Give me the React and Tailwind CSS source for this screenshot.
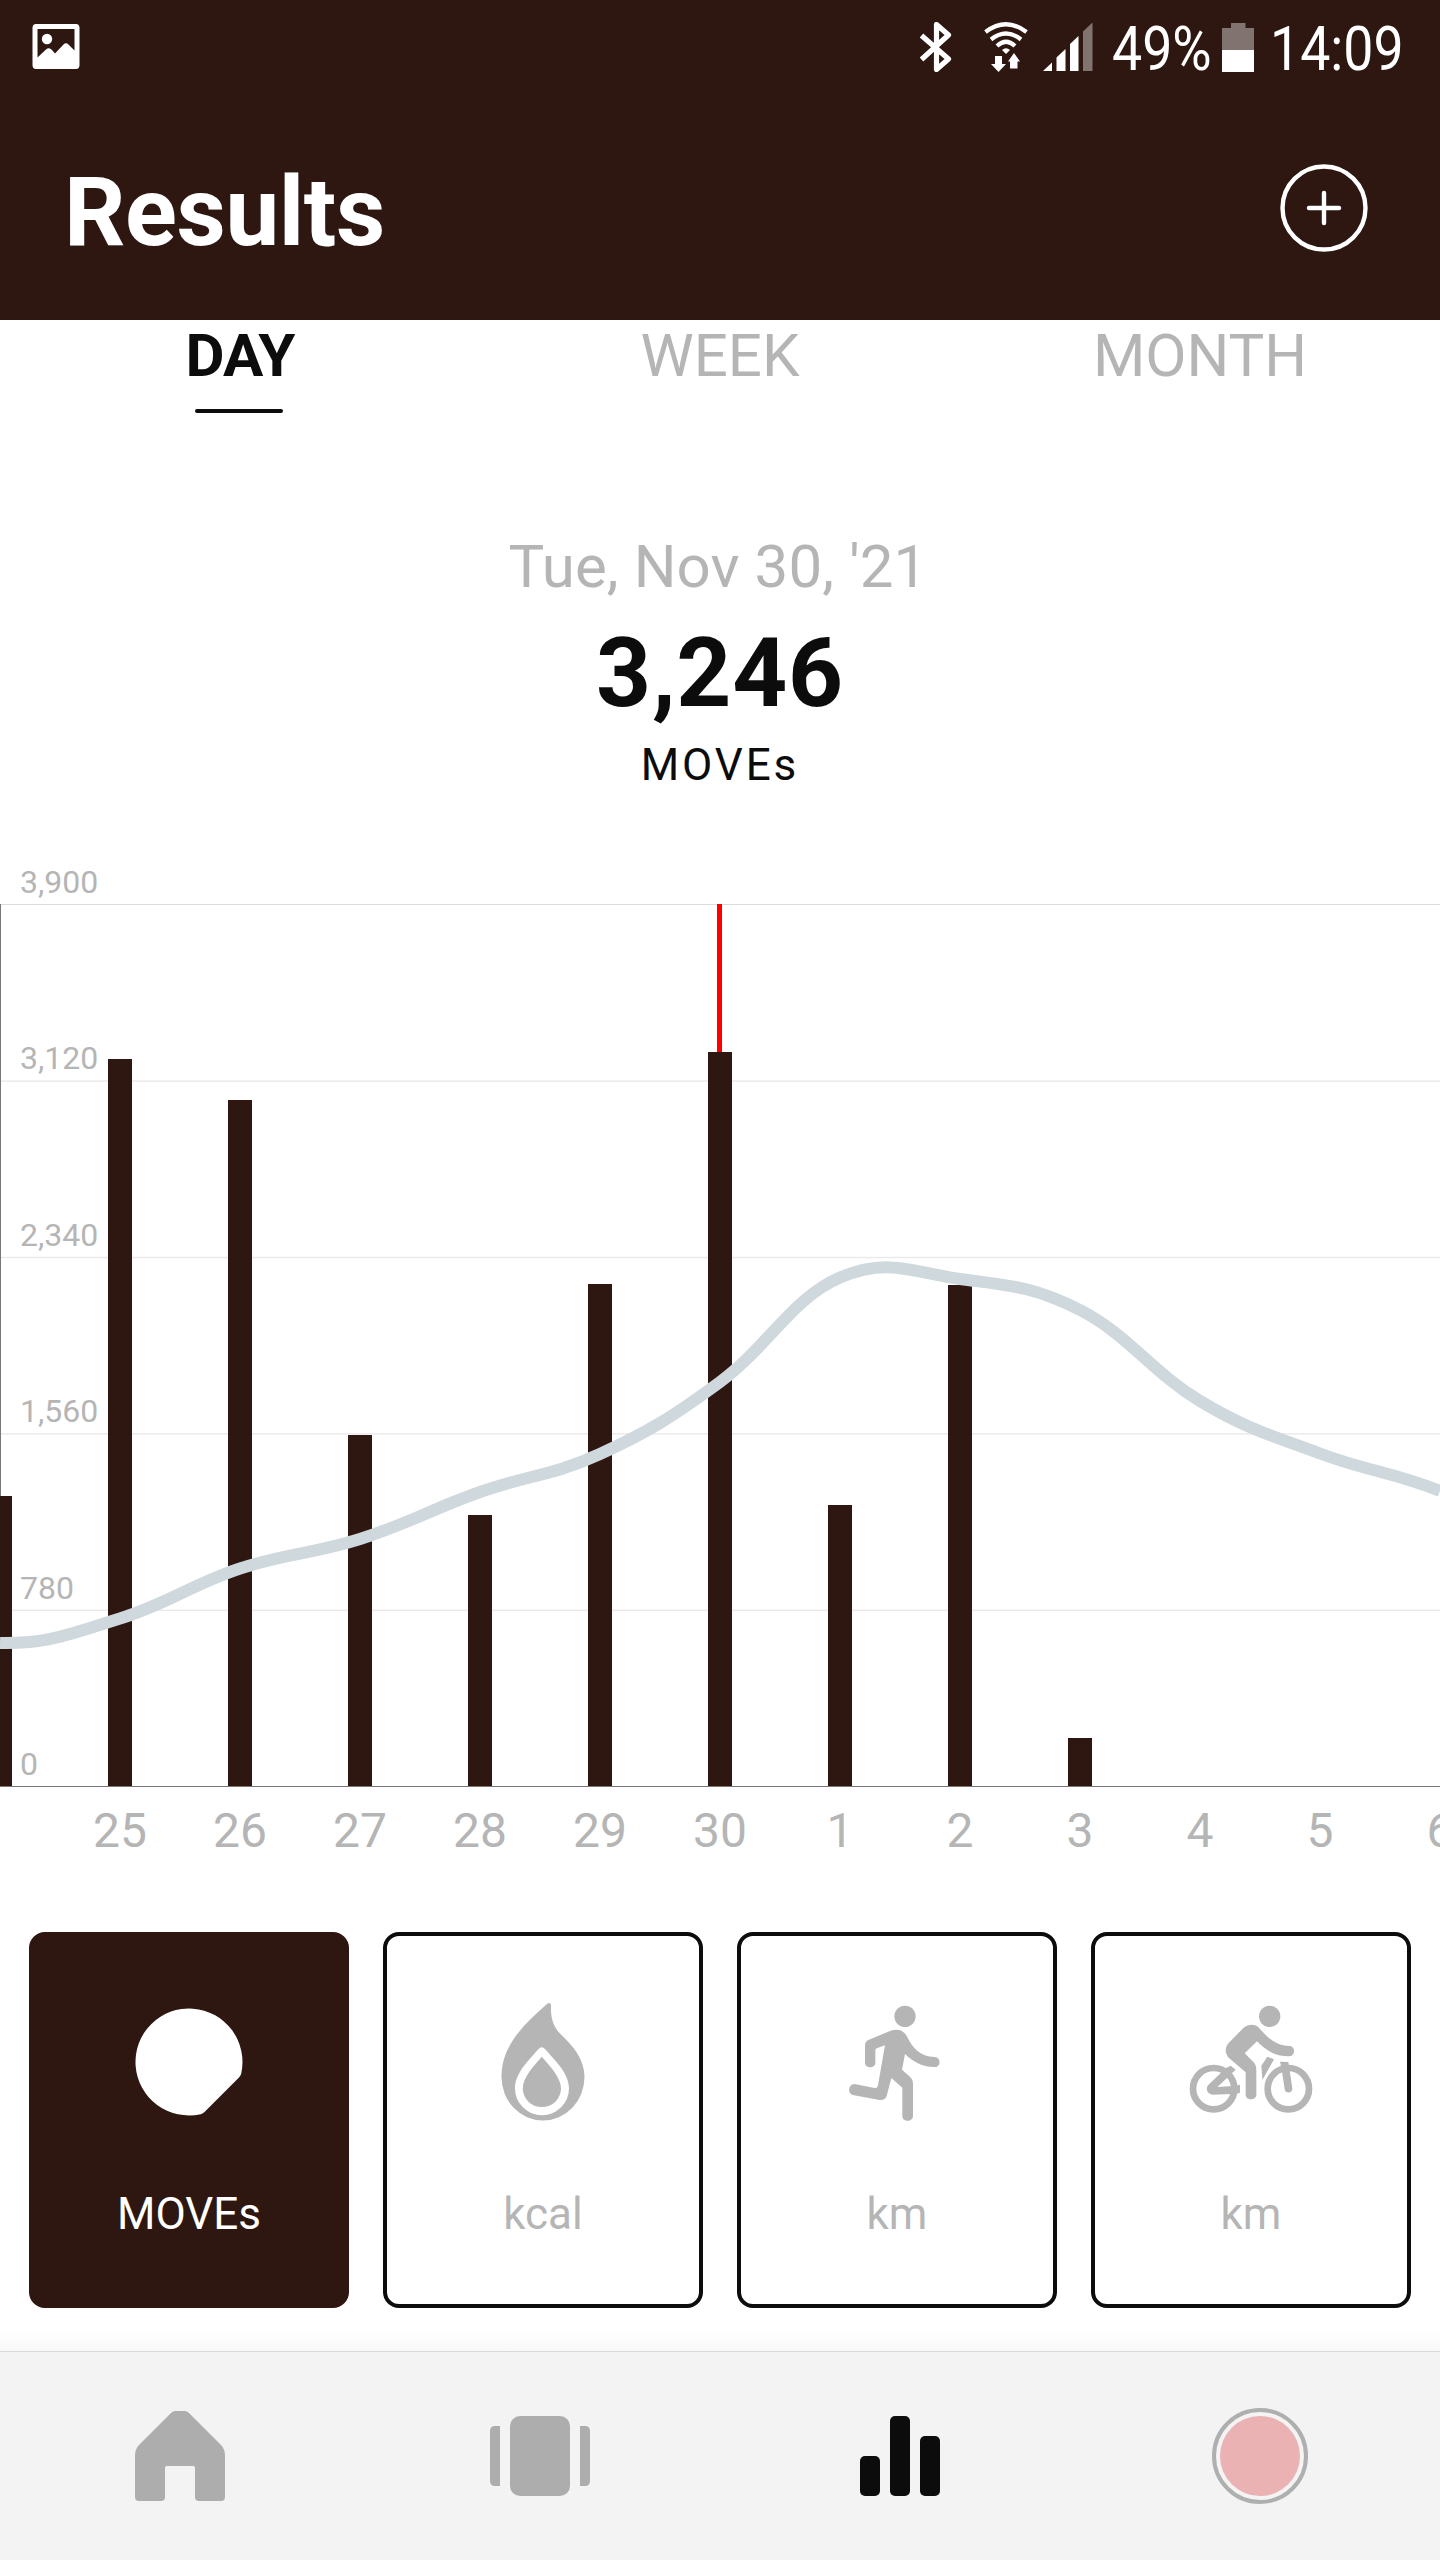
import React, { useState } from "react";

const tabs = ["DAY", "WEEK", "MONTH"];

// top = y of the bar's upper edge inside the chart svg
const days = [
  { label: "", top: 636 },
  { label: "25", top: 199 },
  { label: "26", top: 240 },
  { label: "27", top: 575 },
  { label: "28", top: 655 },
  { label: "29", top: 424 },
  { label: "30", top: 192 },
  { label: "1", top: 645 },
  { label: "2", top: 425 },
  { label: "3", top: 878 },
  { label: "4", top: null },
  { label: "5", top: null },
  { label: "6", top: null },
];

const gridLabels = ["3,900", "3,120", "2,340", "1,560", "780", "0"];

// trend values, one per day plus one hidden neighbour on each side
const trend = [753, 783, 758.5, 708.5, 679, 632, 594, 522, 417.5, 419, 450, 541, 593.5, 631, 690];

const STEP = 120;
const BASE = 926;

function trendPath() {
  let d = `M0 ${trend[1]}`;
  for (let i = 2; i < trend.length - 1; i++) {
    const x0 = (i - 2) * STEP;
    const x1 = (i - 1) * STEP;
    const c1 = trend[i - 1] + (trend[i] - trend[i - 2]) * 0.2;
    const c2 = trend[i] - (trend[i + 1] - trend[i - 1]) * 0.2;
    d += ` C${x0 + 48} ${c1} ${x1 - 48} ${c2} ${x1} ${trend[i]}`;
  }
  return d;
}

function StatusBar() {
  return (
    <div className="flex h-24 items-start justify-between pl-8 pr-[37px] text-white">
      <svg className="mt-6 h-[46px] w-12" viewBox="0 0 48 46" fill="currentColor">
        <path
          fillRule="evenodd"
          d="M4 0H44Q47.5 0 47.5 4V41Q47.5 45 44 45H4Q.5 45 .5 41V4Q.5 0 4 0ZM5.5 5V33.5L14 25.5Q17 23 20 26L23 29.5L31.5 20.5Q34 18 36.5 20.5L42.5 26.5V5Z"
        />
        <circle cx="15" cy="15" r="5.2" />
      </svg>

      <div className="flex items-start">
        {/* bluetooth */}
        <svg className="mt-[22px] h-[50px] w-[34px]" viewBox="0 0 34 50" fill="none" stroke="currentColor" strokeWidth="5.2" strokeLinejoin="round">
          <path d="M2.5 13.5L29.5 37L17.5 47.5V2.5L29.5 13L2.5 37.5" />
        </svg>
        {/* wifi */}
        <svg className="ml-[31px] mt-[22px] h-[50px] w-[44px]" viewBox="0 0 44 50" fill="none" stroke="currentColor" strokeWidth="4.2">
          <path d="M1.5 10Q22 -5.5 42.5 10" />
          <path d="M7 17.5Q22 5.5 37 17.5" />
          <path d="M13 24Q22 15.5 31 24" />
          <path d="M18 28Q22 24.5 26 28L22 32Z" fill="currentColor" stroke="none" />
          <path d="M11 34H18V42H22L14.5 50L7 42H11Z" fill="currentColor" stroke="none" />
          <path d="M26 46.5H33.5V39.5H36L30 31L24 39.5H26Z" fill="currentColor" stroke="none" />
        </svg>
        {/* signal */}
        <svg className="ml-[15px] mt-[22px] h-[50px] w-[50px]" viewBox="0 0 50 50" fill="currentColor">
          <path d="M0 49L9 40.5V49Z" />
          <path d="M13.5 49V35.5L22.5 27V49Z" />
          <path d="M27 49V22L35.5 14V49Z" />
          <path d="M40 49V9.5L49.5 .5V49Z" opacity=".4" />
        </svg>
        <span className="ml-[19px] mt-[13px] w-[99px] origin-left scale-x-[.88] text-[61px] leading-[72px]">49%</span>
        <svg className="ml-[11px] mt-[23px] h-[49px] w-8" viewBox="0 0 32 49" fill="currentColor">
          <path d="M0 5H9V0H23.5V5H32V27H0Z" opacity=".4" />
          <path d="M0 27H32V49H0Z" />
        </svg>
        <span className="ml-4 mt-[13px] w-[133px] origin-left scale-x-[.88] text-[61px] leading-[72px]">14:09</span>
      </div>
    </div>
  );
}

function Chart() {
  return (
    <svg className="mt-[69px] block h-[1000px] w-full" viewBox="0 0 1440 1000">
      {gridLabels.map((label, i) => (
        <g key={label}>
          {i < 5 && (
            <rect x="0" y={44 + i * 176.4} width="1440" height={i === 0 ? 1 : 1.4} fill={i === 0 ? "#dcdcdc" : "#e9e9e9"} />
          )}
          <text x="20" y={33 + i * 176.4} fontSize="32" fill="#b5b5b5">
            {label}
          </text>
        </g>
      ))}
      <rect x="0" y="44" width="1" height="882" fill="#777777" />
      <rect x="717" y="44" width="5" height="150" fill="#ff0000" />
      {days.map((day, i) => (
        <g key={i}>
          {day.top !== null && (
            <rect x={i * STEP - 12} y={day.top} width="24" height={BASE - day.top} fill="#2d1710" />
          )}
          <text x={i * STEP} y="987" fontSize="48" textAnchor="middle" fill="#b5b5b5">
            {day.label}
          </text>
        </g>
      ))}
      <rect x="0" y={BASE} width="1440" height="1" fill="#777777" />
      <path d={trendPath()} fill="none" stroke="#cfd8dc" strokeWidth="12" />
    </svg>
  );
}

function MoveIcon() {
  return (
    <svg className="size-32" viewBox="0 0 128 128" fill="currentColor">
      <path d="M116.2 75.7A53.5 53.5 0 1 0 75.7 116.2Q78 115.5 80 113.5L113.5 80Q115.5 78 116.2 75.7Z" />
    </svg>
  );
}

function FlameIcon() {
  return (
    <svg className="size-32" viewBox="0 0 128 128" fill="currentColor">
      <path
        fillRule="evenodd"
        d="M68.5 5.5C70.5 4 72.5 5.5 72 8.5C71.5 23 76 31 83.500 38C95 49 105.5 62 105.5 79A41.5 43.5 0 0 1 22.5 79C22.5 48 44 27 68.5 5.5ZM59.5 51C50 62 36 75 36 90.5A26.8 26.5 0 0 0 90 90.5C90 75 75.5 62 66 51Q62.8 47.5 59.5 51Z"
      />
      <path d="M62.8 58.7C55 68 43.8 79 43.8 90.5A19 18.5 0 0 0 82 90.5C82 79 70.5 68 62.8 58.7Z" />
    </svg>
  );
}

function RunIcon() {
  return (
    <svg className="size-32" viewBox="-21 24 384 384" fill="currentColor">
      <circle cx="195" cy="79" r="32" />
      <path d="M75 168C75 156 80 152 87 149L150 123C175 114 192 122 202 141C216 172 240 200 284 201C303 202 304 231 284 231C245 231 215 212 195 192L186 239L208 259C216 266 219 272 219 283V378C219 397 187 397 187 378V293L154 264L141 314C138 326 131 331 119 330L38 315C22 310 25 283 43 282L104 294C110 295 113 291 114 286L135 166L112 174C107 176 106 179 106 184V218C106 236 75 236 75 218Z" />
    </svg>
  );
}

function BikeIcon() {
  return (
    <svg className="size-32" viewBox="41 24 384 384" fill="currentColor">
      <circle cx="289" cy="79" r="32" />
      <path d="M211 113C223 102 242 101 254 110C280 139 303 167 348 168C367 168 367 198 348 199C303 199 275 179 251 154L214 190L241 217C247 224 249 230 249 240V314C249 332 217 332 217 314V247L166 203C154 190 154 172 166 159Z" />
      <circle cx="121" cy="296" r="62" fill="none" stroke="currentColor" strokeWidth="20" />
      <circle cx="345" cy="296" r="62" fill="none" stroke="currentColor" strokeWidth="20" />
      <path d="M172 227L187 239L179 247L175 251L132 291L188 287L200 284V308L190 311L119 314C102 313 96 297 104 286L158 234Z" />
      <path d="M282 200L302 208L267 270L264 227Z" />
      <path d="M320 215L345 216L357 295C358 311 336 312 334 298L325 238Z" />
    </svg>
  );
}

const metrics = [
  { label: "MOVEs", Icon: MoveIcon },
  { label: "kcal", Icon: FlameIcon },
  { label: "km", Icon: RunIcon },
  { label: "km", Icon: BikeIcon },
];

function BottomNav() {
  return (
    <nav className="grid h-[209px] grid-cols-4 items-center justify-items-center border-t border-[#d9d9d9] bg-[#f3f3f3]">
      <svg className="size-[100px] text-[#adadad]" viewBox="0 0 100 100" fill="currentColor">
        <path d="M45 5H55Q57 5 59 7L91 39Q95 43 95 50V91Q95 95 91 95H69Q65 95 65 91V62Q65 60 63 60H37Q35 60 35 62V91Q35 95 31 95H9Q5 95 5 91V50Q5 43 9 39L41 7Q43 5 45 5Z" />
      </svg>
      <svg className="size-[100px] text-[#adadad]" viewBox="0 0 100 100" fill="currentColor">
        <rect x="20" y="10" width="60" height="80" rx="10" />
        <path d="M10 20V80H5Q0 80 0 75V25Q0 20 5 20Z" />
        <path d="M90 20V80H95Q100 80 100 75V25Q100 20 95 20Z" />
      </svg>
      <svg className="size-[100px] text-[#0c0c0c]" viewBox="0 0 100 100" fill="currentColor">
        <rect x="10" y="50" width="20" height="40" rx="5" />
        <rect x="40" y="10" width="20" height="80" rx="5" />
        <rect x="70" y="30" width="20" height="60" rx="5" />
      </svg>
      <svg className="size-[100px]" viewBox="0 0 100 100">
        <circle cx="50" cy="50" r="46" fill="#f5f3f3" stroke="#adb0ae" strokeWidth="4" />
        <circle cx="50" cy="50" r="40" fill="#ebb2b4" />
      </svg>
    </nav>
  );
}

function App() {
  const [activeTab, setActiveTab] = useState("DAY");
  const [activeMetric, setActiveMetric] = useState(0);

  return (
    <div className="flex h-[2560px] w-[1440px] flex-col overflow-hidden bg-white font-['Roboto',sans-serif]">
      <header className="h-80 shrink-0 bg-[#2d1710] text-white">
        <StatusBar />
        <div className="flex h-56 items-center justify-between pl-16 pr-[72px]">
          <h1 className="pt-2 text-[96px] font-bold leading-[96px] tracking-[-0.4px]">Results</h1>
          <button>
            <svg className="size-[88px]" viewBox="0 0 88 88" fill="none" stroke="currentColor" strokeWidth="4.4" strokeLinecap="round">
              <circle cx="44" cy="44" r="41.5" />
              <path d="M44 29V59M29 44H59" />
            </svg>
          </button>
        </div>
      </header>

      <div className="grid h-[93px] shrink-0 grid-cols-3 pt-1.5">
        {tabs.map((tab) => (
          <button key={tab} onClick={() => setActiveTab(tab)} className="flex flex-col items-center">
            <span
              className={
                tab === activeTab
                  ? "text-[60px] font-bold leading-[60px] tracking-[-1px] text-[#0c0c0c]"
                  : "text-[60px] leading-[60px] text-[#b5b5b5]"
              }
            >
              {tab}
            </span>
            {tab === activeTab && <span className="mr-0.5 mt-[23px] h-1 w-22 rounded-full bg-[#0c0c0c]" />}
          </button>
        ))}
      </div>

      <div className="mt-[118px] flex shrink-0 flex-col items-center text-[#0c0c0c]">
        <p className="pr-1 text-[60px] leading-[72px] tracking-[0.1px] text-[#b5b5b5]">Tue, Nov 30, '21</p>
        <p className="mt-[22px] text-[96px] font-bold leading-[96px] tracking-[0.8px]">3,246</p>
        <p className="mt-[18px] text-[44px] leading-[52px] tracking-[2.9px]">MOVEs</p>
      </div>

      <Chart />

      <div className="mt-[72px] grid shrink-0 grid-cols-4 gap-[34px] px-[29px]">
        {metrics.map(({ label, Icon }, i) => (
          <button
            key={i}
            onClick={() => setActiveMetric(i)}
            className={
              i === activeMetric
                ? "flex h-[376px] flex-col items-center rounded-2xl border-4 border-[#2d1710] bg-[#2d1710] pt-[62px] text-white"
                : "flex h-[376px] flex-col items-center rounded-2xl border-4 border-[#0c0c0c] bg-white pt-[62px] text-[#b5b5b5]"
            }
          >
            <Icon />
            <span className="mt-[62px] text-[44px] leading-[52px]">{label}</span>
          </button>
        ))}
      </div>

      <div className="mt-auto">
        <div className="h-[21px] bg-linear-to-b from-white to-[#f8f8f8]" />
        <BottomNav />
      </div>
    </div>
  );
}

export default App;
